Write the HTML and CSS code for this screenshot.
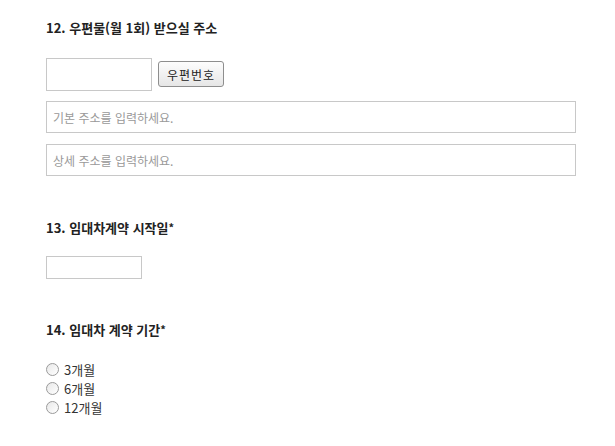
FILE: index.html
```html
<!DOCTYPE html>
<html lang="ko">
	<head>
		<meta charset="UTF-8">
		<meta name="viewport" content="width=device-width, initial-scale=1.0">
		<title>임대차 신청서</title>
		<link rel="stylesheet" href="styles.css">
	</head>
	<body>
		<div class="form">
			<div class="question q-address">
				<p class="q-title">12. 우편물(월 1회) 받으실 주소</p>
				<div class="zip-row">
					<input type="text" class="zip-input">
					<button type="button" class="zip-btn">우편번호</button>
				</div>
				<input type="text" class="addr-input" placeholder="기본 주소를 입력하세요.">
				<input type="text" class="addr-input" placeholder="상세 주소를 입력하세요.">
			</div>

			<div class="question q-date">
				<p class="q-title">13. 임대차계약 시작일<span class="req">*</span></p>
				<input type="text" class="date-input">
			</div>

			<div class="question q-period">
				<p class="q-title">14. 임대차 계약 기간<span class="req">*</span></p>
				<ul class="radio-list">
					<li><label><input type="radio" name="period"> 3개월</label></li>
					<li><label><input type="radio" name="period"> 6개월</label></li>
					<li><label><input type="radio" name="period"> 12개월</label></li>
				</ul>
			</div>
		</div>
	</body>
</html>
```

FILE: styles.css
```css
* {
	margin: 0;
	padding: 0;
	box-sizing: border-box;
}

body {
	background-color: #fff;
	font-family: "Noto Sans CJK KR", "Noto Sans", sans-serif;
	font-size: 12px;
	color: #333;
}

.form {
	width: 576px;
	padding: 18px 0 0 46px;
}

.q-title {
	font-size: 13px;
	font-weight: bold;
	line-height: 20px;
	color: #222;
}

.req {
	font-size: 11px;
	vertical-align: 1px;
}

input[type="text"] {
	display: block;
	border: 1px solid #c8c8c8;
	background-color: #fff;
	font-family: inherit;
	font-size: 12px;
	color: #333;
	outline: none;
}

input::placeholder {
	color: #999;
}

.zip-row {
	display: flex;
	align-items: flex-start;
	gap: 6px;
	margin-top: 20px;
}

.zip-input {
	width: 106px;
	height: 33px;
}

.zip-btn {
	width: 66px;
	height: 26px;
	margin-top: 3px;
	border: 1px solid #8e8e8e;
	border-radius: 3px;
	background: linear-gradient(#fdfdfd, #e6e6e6);
	font-family: inherit;
	font-size: 12px;
	letter-spacing: 1px;
	color: #222;
}

.addr-input {
	width: 530px;
	height: 32px;
	margin-top: 10px;
	padding: 0 6px;
}

.addr-input + .addr-input {
	margin-top: 11px;
}

.q-date {
	margin-top: 41px;
}

.date-input {
	width: 96px;
	height: 23px;
	margin-top: 18px;
}

.q-period {
	margin-top: 40px;
}

.radio-list {
	list-style: none;
	margin-top: 20px;
}

.radio-list li {
	line-height: 19px;
	height: 19px;
}

.radio-list label {
	display: flex;
	align-items: center;
	gap: 5px;
	font-size: 13px;
	color: #333;
}

.radio-list input {
	appearance: none;
	width: 13px;
	height: 13px;
	border: 1px solid #9a9a9a;
	border-radius: 50%;
	background: linear-gradient(135deg, #e8e8e8, #fff);
}
```
